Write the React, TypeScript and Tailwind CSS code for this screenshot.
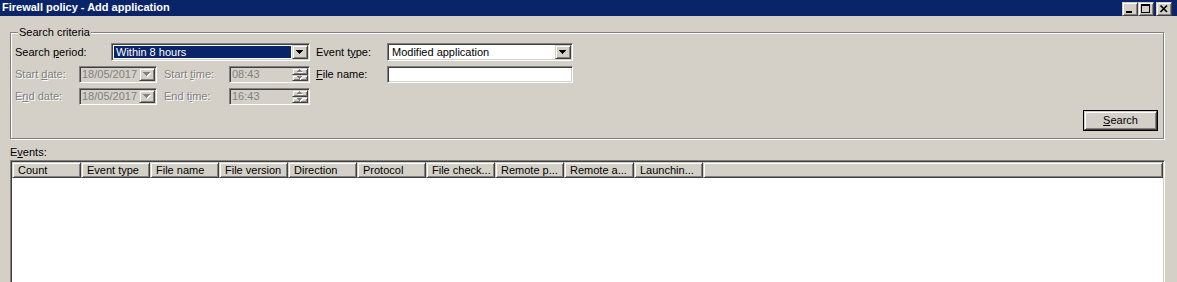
import type { ReactNode } from "react";

const sunken =
  "border border-t-[#808080] border-l-[#808080] border-b-white border-r-white shadow-[inset_1px_1px_0_#404040,inset_-1px_-1px_0_#d4d0c8]";
const raised =
  "border border-t-[#d4d0c8] border-l-[#d4d0c8] border-b-[#404040] border-r-[#404040] shadow-[inset_1px_1px_0_#ffffff,inset_-1px_-1px_0_#808080]";
const disabledText = "text-[#808080] [text-shadow:1px_1px_0_#ffffff]";

const columns = [
  { label: "Count", w: "w-[69px]" },
  { label: "Event type", w: "w-[69px]" },
  { label: "File name", w: "w-[69px]" },
  { label: "File version", w: "w-[69px]" },
  { label: "Direction", w: "w-[69px]" },
  { label: "Protocol", w: "w-[69px]" },
  { label: "File check...", w: "w-[69px]" },
  { label: "Remote p...", w: "w-[69px]" },
  { label: "Remote a...", w: "w-[70px]" },
  { label: "Launchin...", w: "w-[69px]" },
];

function DownArrow({ disabled }: { disabled?: boolean }) {
  const rows = (dx: number, dy: number, fill: string) => (
    <g fill={fill}>
      <rect x={0 + dx} y={0 + dy} width={7} height={1} />
      <rect x={1 + dx} y={1 + dy} width={5} height={1} />
      <rect x={2 + dx} y={2 + dy} width={3} height={1} />
      <rect x={3 + dx} y={3 + dy} width={1} height={1} />
    </g>
  );
  return (
    <svg width="8" height="5" viewBox="0 0 8 5" shapeRendering="crispEdges">
      {disabled && rows(1, 1, "#ffffff")}
      {rows(0, 0, disabled ? "#808080" : "#000000")}
    </svg>
  );
}

function TinyArrow({ up }: { up?: boolean }) {
  const r = up
    ? [
        [2, 0, 1],
        [1, 1, 3],
        [0, 2, 5],
      ]
    : [
        [0, 0, 5],
        [1, 1, 3],
        [2, 2, 1],
      ];
  return (
    <svg width="6" height="4" viewBox="0 0 6 4" shapeRendering="crispEdges">
      {r.map(([x, y, w]) => (
        <rect key={`w${y}`} x={x + 1} y={y + 1} width={w} height={1} fill="#ffffff" />
      ))}
      {r.map(([x, y, w]) => (
        <rect key={`g${y}`} x={x} y={y} width={w} height={1} fill="#808080" />
      ))}
    </svg>
  );
}

function DropButton({ disabled }: { disabled?: boolean }) {
  return (
    <div className={`flex w-[16px] shrink-0 items-center justify-center bg-[#d4d0c8] ${raised}`}>
      <DownArrow disabled={disabled} />
    </div>
  );
}

function Combo({
  value,
  width,
  selected,
}: {
  value: string;
  width: string;
  selected?: boolean;
}) {
  return (
    <div className={`flex h-[18px] ${width} bg-white p-[1px] ${sunken}`}>
      <div className="flex flex-1 items-center py-[1px] pl-[1px] pr-[1px]">
        <div
          className={`flex h-full flex-1 items-center pl-[2px] ${
            selected ? "bg-[#0a246a] text-white" : "text-black"
          }`}
        >
          {value}
        </div>
      </div>
      <DropButton />
    </div>
  );
}

function DateField({ value }: { value: string }) {
  return (
    <div className={`flex h-[17px] w-[78px] bg-[#d4d0c8] p-[1px] ${sunken}`}>
      <div className="flex flex-1 items-center pl-[1px] text-[#808080]">{value}</div>
      <DropButton disabled />
    </div>
  );
}

function TimeField({ value }: { value: string }) {
  return (
    <div className={`flex h-[17px] w-[81px] bg-[#d4d0c8] p-[1px] ${sunken}`}>
      <div className="flex flex-1 items-center pl-[1px] text-[#808080]">{value}</div>
      <div className="flex w-[16px] shrink-0 flex-col">
        <div className={`flex flex-1 items-center justify-center ${raised}`}>
          <TinyArrow up />
        </div>
        <div className={`flex flex-1 items-center justify-center ${raised}`}>
          <TinyArrow />
        </div>
      </div>
    </div>
  );
}

function Label({ children, width, disabled, className = "" }: { children: ReactNode; width: string; disabled?: boolean; className?: string }) {
  return (
    <div className={`flex shrink-0 items-center ${width} ${disabled ? disabledText : "text-black"} ${className}`}>
      <span>{children}</span>
    </div>
  );
}

function TitleButton({ children, className = "" }: { children: ReactNode; className?: string }) {
  return (
    <div className={`flex h-[14px] w-[16px] items-center justify-center bg-[#d4d0c8] ${raised} ${className}`}>
      {children}
    </div>
  );
}

export default function App() {
  return (
    <div className="h-[282px] w-[1177px] overflow-hidden bg-[#d4d0c8] text-[11px] leading-[13px] [font-family:'Liberation_Sans',Arial,sans-serif]">
      {/* title bar */}
      <div className="flex h-[16px] items-start justify-between bg-[#0a246a] pl-[2px] pr-[5px]">
        <span className="pt-[1px] font-bold text-white">Firewall policy - Add application</span>
        <div className="flex pt-[2px]">
          <TitleButton>
            <svg width="14" height="12" viewBox="0 0 14 12" shapeRendering="crispEdges">
              <rect x="3" y="8" width="6" height="2" fill="#000" />
            </svg>
          </TitleButton>
          <TitleButton>
            <svg width="14" height="12" viewBox="0 0 14 12" shapeRendering="crispEdges">
              <rect x="2.5" y="1.5" width="8" height="8" fill="none" stroke="#000" />
              <rect x="2" y="1" width="9" height="2" fill="#000" />
            </svg>
          </TitleButton>
          <TitleButton className="ml-[2px]">
            <svg width="14" height="12" viewBox="0 0 14 12">
              <path d="M3.5 2.5 L10 9 M10 2.5 L3.5 9" stroke="#000" strokeWidth="1.7" />
            </svg>
          </TitleButton>
        </div>
      </div>

      {/* search criteria group */}
      <div className="relative ml-[10px] mt-[16px] flex h-[107px] w-[1154px] flex-col border border-[#808080] pl-[4px] pr-[4px] pt-[10px] shadow-[1px_1px_0_#ffffff,inset_1px_1px_0_#ffffff]">
        <span className="absolute -top-[7px] left-[7px] bg-[#d4d0c8] px-[1px]">Search criteria</span>

        <div className="flex h-[18px]">
          <Label width="w-[96px]">
            Search <span className="underline">p</span>eriod:
          </Label>
          <Combo value="Within 8 hours" width="w-[199px]" selected />
          <Label width="w-[71px]" className="ml-[6px]">
            Event t<span className="underline">y</span>pe:
          </Label>
          <Combo value="Modified application" width="w-[186px]" />
        </div>

        <div className="mt-[5px] flex h-[17px]">
          <Label width="w-[64px]" disabled>
            Start <span className="underline">d</span>ate:
          </Label>
          <DateField value="18/05/2017" />
          <Label width="w-[65px]" className="ml-[7px]" disabled>
            Start <span className="underline">t</span>ime:
          </Label>
          <TimeField value="08:43" />
          <Label width="w-[71px]" className="ml-[6px]">
            <span className="underline">F</span>ile name:
          </Label>
          <div className={`h-[17px] w-[186px] bg-white ${sunken}`} />
        </div>

        <div className="mt-[5px] flex h-[17px]">
          <Label width="w-[64px]" disabled>
            E<span className="underline">n</span>d date:
          </Label>
          <DateField value="18/05/2017" />
          <Label width="w-[65px]" className="ml-[7px]" disabled>
            End t<span className="underline">i</span>me:
          </Label>
          <TimeField value="16:43" />
        </div>

        <div className="mt-[5px] flex justify-end pr-[1px]">
          <div className="h-[21px] w-[75px] border border-black">
            <div className={`flex h-full w-full items-center justify-center bg-[#d4d0c8] ${raised}`}>
              <span>
                <span className="underline">S</span>earch
              </span>
            </div>
          </div>
        </div>
      </div>

      {/* events */}
      <div className="ml-[10px] mt-[7px] h-[13px]">
        E<span className="underline">v</span>ents:
      </div>
      <div className={`ml-[10px] mt-[1px] h-[140px] w-[1155px] bg-white p-[1px] ${sunken}`}>
        <div className="flex h-[16px]">
          {columns.map((c) => (
            <div key={c.label} className={`flex ${c.w} shrink-0 items-center bg-[#d4d0c8] pl-[5px] ${raised}`}>
              {c.label}
            </div>
          ))}
          <div className={`flex-1 bg-[#d4d0c8] ${raised}`} />
        </div>
      </div>
    </div>
  );
}
